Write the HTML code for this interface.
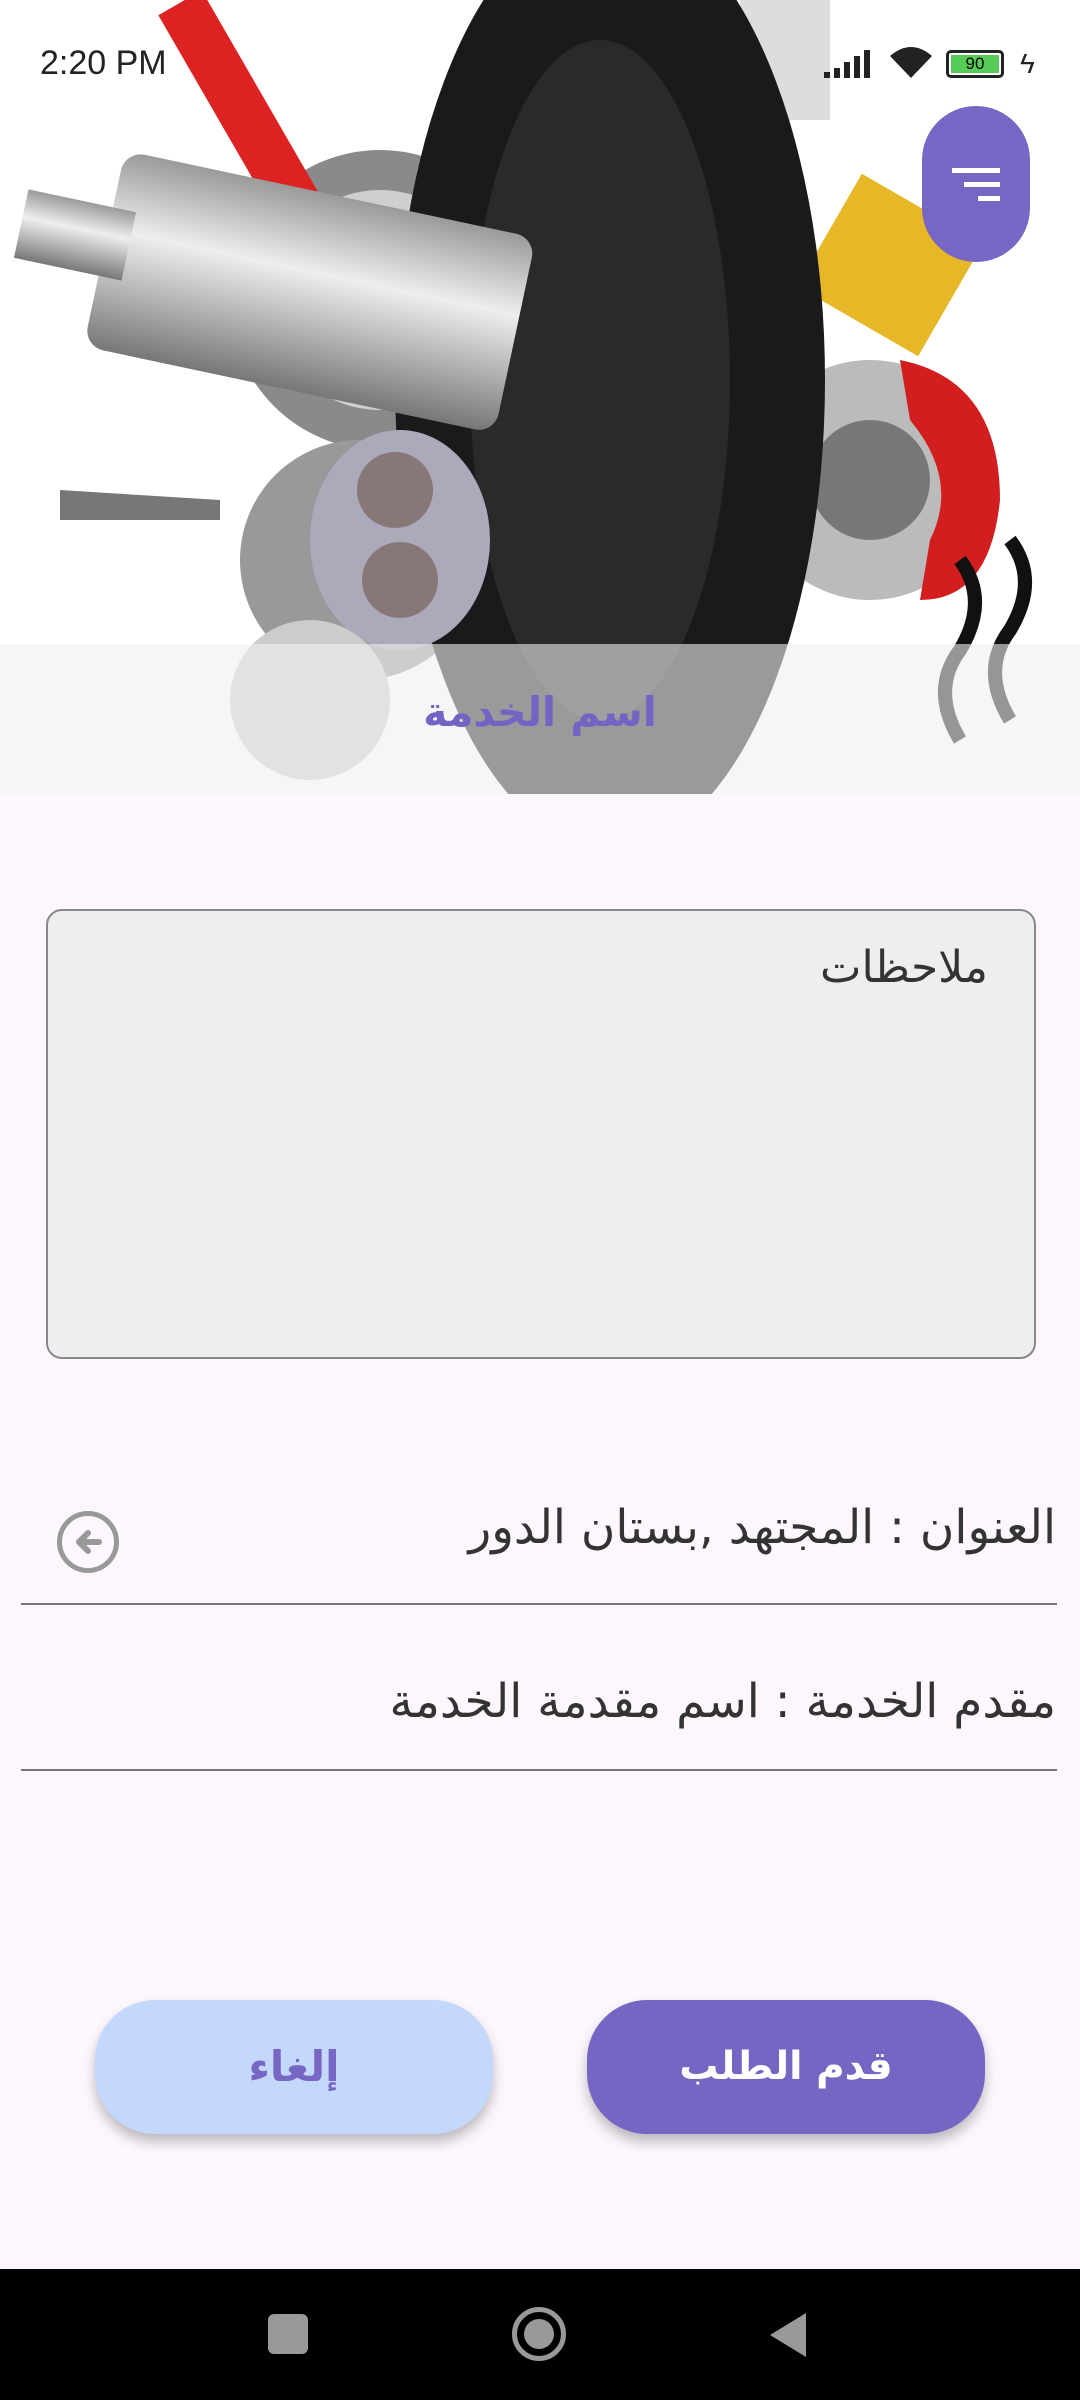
<!DOCTYPE html>
<html><head><meta charset="utf-8"><style>
*{margin:0;padding:0;box-sizing:border-box}
body{width:1080px;height:2400px;background:#fdf7fd;position:relative;overflow:hidden;font-family:"Liberation Sans","Noto Sans CJK SC",sans-serif}
.abs{position:absolute}
.ar{font-family:"DejaVu Sans","Noto Sans CJK SC",sans-serif;direction:rtl}
</style></head><body>
<div class="abs" style="left:0;top:0;width:1080px;height:794px;background:#fff;overflow:hidden">
<svg width="1080" height="794" viewBox="0 0 1080 794">
 <defs>
  <linearGradient id="m" x1="0" y1="0" x2="0" y2="1"><stop offset="0" stop-color="#9a9a9a"/><stop offset=".4" stop-color="#eee"/><stop offset="1" stop-color="#777"/></linearGradient>
 </defs>
 <circle cx="380" cy="300" r="150" fill="#8a8a8a"/>
 <circle cx="380" cy="300" r="110" fill="#cfcfcf"/>
 <circle cx="360" cy="560" r="120" fill="#999"/>
 <rect x="240" y="-20" width="50" height="340" fill="#d22" transform="rotate(-30 265 150)"/>
 <circle cx="870" cy="480" r="120" fill="#bbb"/>
 <circle cx="870" cy="480" r="60" fill="#777"/>
 <path d="M900 360 Q1000 380 1000 500 Q990 600 920 600 L930 540 Q960 480 910 420Z" fill="#d21e1e"/>
 <rect x="820" y="200" width="140" height="130" fill="#e6b828" transform="rotate(30 890 265)"/>
 <path d="M960 560 q30 40 0 90 q-30 40 0 90" stroke="#111" stroke-width="14" fill="none"/>
 <path d="M1010 540 q30 40 0 90 q-30 40 0 90" stroke="#111" stroke-width="14" fill="none"/>
 <rect x="740" y="0" width="90" height="120" fill="#ddd"/>
 <ellipse cx="610" cy="380" rx="215" ry="470" fill="#1a1a1a"/>
 <ellipse cx="600" cy="380" rx="130" ry="340" fill="#2a2a2a"/>
 <rect x="100" y="190" width="420" height="200" rx="20" fill="url(#m)" transform="rotate(12 300 290)"/>
 <rect x="20" y="200" width="110" height="70" fill="url(#m)" transform="rotate(12 75 235)"/>
 <ellipse cx="400" cy="540" rx="90" ry="110" fill="#aab"/>
 <circle cx="395" cy="490" r="38" fill="#877"/>
 <circle cx="400" cy="580" r="38" fill="#877"/>
 <path d="M60 490 L220 500 L220 520 L60 520Z" fill="#777"/>
 <circle cx="310" cy="700" r="80" fill="#ccc"/>
</svg>
<div class="abs" style="left:0;top:644px;width:1080px;height:150px;background:rgba(240,240,240,.6)"></div>
<div class="abs ar" style="left:0;width:1080px;top:688px;text-align:center;font-size:41px;font-weight:bold;color:#7563c4">اسم الخدمة</div>
</div>
<!-- status bar -->
<div class="abs" style="left:40px;top:44px;font-size:34px;color:#222">2:20 PM</div>
<svg class="abs" style="left:822px;top:46px" width="80" height="36">
 <rect x="2" y="26" width="6" height="6" fill="#222"/><rect x="12" y="22" width="6" height="10" fill="#222"/><rect x="22" y="16" width="6" height="16" fill="#222"/><rect x="32" y="10" width="6" height="22" fill="#222"/><rect x="42" y="4" width="6" height="28" fill="#222"/>
</svg>
<svg class="abs" style="left:888px;top:44px" width="46" height="38"><path d="M23 34 L2 12 Q23 -6 44 12Z" fill="#222"/></svg>
<div class="abs" style="left:946px;top:50px;width:58px;height:28px;border:3px solid #222;border-radius:5px;background:#fff"><div style="margin:2px;height:18px;width:48px;background:#5c5;font-size:17px;text-align:center;line-height:18px">90</div></div>
<div class="abs" style="left:1020px;top:48px;font-size:28px;color:#222">ϟ</div>
<!-- FAB -->
<div class="abs" style="left:922px;top:106px;width:108px;height:156px;border-radius:54px;background:#7766c4">
 <div class="abs" style="left:30px;top:62px;width:48px;height:5px;background:#fff"></div>
 <div class="abs" style="left:42px;top:76px;width:36px;height:5px;background:#fff"></div>
 <div class="abs" style="left:56px;top:90px;width:22px;height:5px;background:#fff"></div>
</div>
<!-- notes -->
<div class="abs" style="left:46px;top:909px;width:990px;height:450px;background:#eee;border:2px solid #888;border-radius:16px"></div>
<div class="abs ar" style="right:92px;top:942px;font-size:44px;color:#333">ملاحظات</div>
<!-- address -->
<div class="abs ar" style="right:24px;top:1500px;font-size:47px;color:#333">العنوان : المجتهد ,بستان الدور</div>
<div class="abs" style="left:57px;top:1511px;width:62px;height:62px;border:5px solid #999;border-radius:50%"></div>
<svg class="abs" style="left:71px;top:1525px" width="34" height="34"><path d="M28 17 H9 M17 8 L8 17 L17 26" stroke="#999" stroke-width="6" fill="none" stroke-linecap="round" stroke-linejoin="round"/></svg>
<div class="abs" style="left:21px;top:1603px;width:1036px;height:2px;background:#777"></div>
<div class="abs ar" style="right:24px;top:1674px;font-size:47px;color:#333">مقدم الخدمة : اسم مقدمة الخدمة</div>
<div class="abs" style="left:21px;top:1769px;width:1036px;height:2px;background:#777"></div>
<!-- buttons -->
<div class="abs ar" style="left:95px;top:2000px;width:398px;height:134px;border-radius:60px;background:#c4d8fc;box-shadow:0 8px 12px rgba(0,0,0,.25);text-align:center;line-height:134px;font-size:42px;font-weight:bold;color:#7766c4">إلغاء</div>
<div class="abs ar" style="left:587px;top:2000px;width:398px;height:134px;border-radius:60px;background:#7566c4;box-shadow:0 8px 12px rgba(0,0,0,.25);text-align:center;line-height:134px;font-size:39px;font-weight:bold;color:#fff">قدم الطلب</div>
<!-- nav -->
<div class="abs" style="left:0;top:2269px;width:1080px;height:131px;background:#000">
 <div class="abs" style="left:268px;top:45px;width:40px;height:40px;border-radius:6px;background:#999"></div>
 <div class="abs" style="left:512px;top:38px;width:54px;height:54px;border:5px solid #999;border-radius:50%"><div style="margin:7px;width:30px;height:30px;border-radius:50%;background:#999"></div></div>
 <svg class="abs" style="left:768px;top:42px" width="40" height="48"><path d="M38 2 L38 46 L2 24Z" fill="#999"/></svg>
</div>
</body></html>
